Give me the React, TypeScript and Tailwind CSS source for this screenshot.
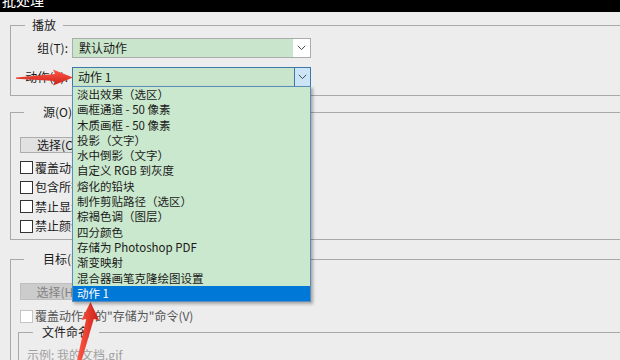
const actions = [
  '淡出效果（选区）',
  '画框通道 - 50 像素',
  '木质画框 - 50 像素',
  '投影（文字）',
  '水中倒影（文字）',
  '自定义 RGB 到灰度',
  '熔化的铅块',
  '制作剪贴路径（选区）',
  '棕褐色调（图层）',
  '四分颜色',
  '存储为 Photoshop PDF',
  '渐变映射',
  '混合器画笔克隆绘图设置',
  '动作 1',
];

function Chevron() {
  return (
    <svg width="9" height="6" viewBox="0 0 9 6" aria-hidden>
      <polyline points="0.8,0.8 4.5,4.6 8.2,0.8" fill="none" stroke="#4d4d4d" strokeWidth="1" />
    </svg>
  );
}

function Checkbox({ label, disabled }: { label: string; disabled?: boolean }) {
  return (
    <div className="flex h-[19.5px] items-center">
      <span
        className={
          disabled
            ? 'h-[13px] w-[13px] border border-[#c4c4c4] bg-white'
            : 'h-[13px] w-[13px] border border-[#333] bg-white'
        }
      />
      <span className={disabled ? 'ml-[2px] whitespace-nowrap text-[#555]' : 'ml-[2px] whitespace-nowrap'}>
        {label}
      </span>
    </div>
  );
}

/** Red callout arrows drawn over the dialog */
function Arrows() {
  return (
    <svg className="pointer-events-none absolute left-0 top-0" width="620" height="360" aria-hidden>
      <defs>
        <linearGradient id="ar" x1="0" y1="0" x2="0" y2="1">
          <stop offset="0" stopColor="#ff5a48" />
          <stop offset="1" stopColor="#cc1f17" />
        </linearGradient>
        <linearGradient id="au" x1="0" y1="0" x2="1" y2="0">
          <stop offset="0" stopColor="#ff5a48" />
          <stop offset="1" stopColor="#cc1f17" />
        </linearGradient>
      </defs>
      <polygon points="16,77.6 30,76.2 55,74 53,69.5 73,77.5 53,85.5 55,81 30,79.6 16,78.8" fill="url(#ar)" />
      <polygon points="90.5,302 99,320 93.8,319 81.2,362 76.6,362 86.2,319 81.5,320" fill="url(#au)" />
    </svg>
  );
}

export default function App() {
  return (
    <div className="relative h-[360px] w-[620px] overflow-hidden bg-[#ededed] font-['Noto_Sans_CJK_SC','Noto_Sans',sans-serif] text-[12px] leading-[16px] text-[#1a1a1a]">
      <div className="h-3 overflow-hidden bg-black">
        <div className="-mt-[9px] pl-[2px] text-[14px] leading-[18px] text-white">批处理</div>
      </div>

      <fieldset className="-mr-8 ml-[10px] mt-[5px] border border-[#a9a9a9] pb-[8px]">
        <legend className="ml-[14px] px-[7px]">播放</legend>
        <div className="flex flex-col gap-[9px] pt-[5px]">
          <div className="flex h-5 items-center">
            <span className="w-[57px] text-right">组(T):</span>
            <div className="ml-[4px] flex h-5 w-[239px] border border-[#acacac] bg-white">
              <div className="flex-1 bg-[#c9e6cc] pl-[6px] leading-[18px]">默认动作</div>
              <div className="flex w-[17px] items-center justify-center">
                <Chevron />
              </div>
            </div>
          </div>
          <div className="flex h-5 items-center">
            <span className="w-[57px] text-right">动作(A):</span>
            <div className="relative ml-[4px] flex h-5 w-[239px] border border-[#3c78aa] bg-white">
              <div className="flex-1 bg-[#c9e6cc] pl-[5px] leading-[18px]">动作 1</div>
              <div className="flex w-[16px] items-center justify-center border-l border-[#3c78aa] bg-[#cbe4f6]">
                <Chevron />
              </div>
              <ul className="absolute -left-px top-full z-10 w-[239px] border border-[#5b8dbb] bg-[#cae8cd] text-[11.5px] shadow-[2px_2px_3px_rgba(0,0,0,0.3)]">
                {actions.map((a, i) => (
                  <li
                    key={a}
                    className={
                      i === actions.length - 1
                        ? 'h-[15.3px] whitespace-nowrap bg-[#0078d7] pl-[4px] leading-[15.3px] text-white'
                        : 'h-[15.3px] whitespace-nowrap pl-[4px] leading-[15.3px]'
                    }
                  >
                    {a}
                  </li>
                ))}
              </ul>
            </div>
          </div>
        </div>
      </fieldset>

      <fieldset className="-mr-8 ml-[10px] mt-[8px] border border-[#a9a9a9] pb-[3px]">
        <legend className="ml-[13px] pl-[19px] pr-[4px]">源(O):</legend>
        <button className="ml-[9px] mt-[17px] block h-[16px] w-[84px] border border-[#adadad] bg-[#e1e1e1] text-center leading-[14px]">
          选择(C)...
        </button>
        <div className="ml-[9px] mt-[5px]">
          <Checkbox label='覆盖动作中的"打开"命令(R)' />
          <Checkbox label="包含所有子文件夹(I)" />
          <Checkbox label="禁止显示文件打开选项对话框(F)" />
          <Checkbox label="禁止颜色配置文件警告(P)" />
        </div>
      </fieldset>

      <fieldset className="-mr-8 ml-[10px] mt-[11px] border border-[#a9a9a9]">
        <legend className="ml-[13px] pl-[19px] pr-[4px]">目标(D):</legend>
        <button className="ml-[9px] mt-[16px] block h-[17px] w-[84px] border border-[#bfbfbf] bg-[#cccccc] text-center leading-[15px] text-[#838383]">
          选择(H)...
        </button>
        <div className="ml-[9px] mt-[8px] flex h-[16px] items-center">
          <Checkbox label='覆盖动作中的"存储为"命令(V)' disabled />
        </div>
        <fieldset className="-mr-8 ml-[7px] border border-[#a9a9a9]">
          <legend className="ml-[14px] px-[9px]">文件命名</legend>
          <div className="ml-[8px] mt-[7px] text-[#a0a0a0]">示例: 我的文档.gif</div>
          <div className="h-10" />
        </fieldset>
      </fieldset>

      <Arrows />
    </div>
  );
}
